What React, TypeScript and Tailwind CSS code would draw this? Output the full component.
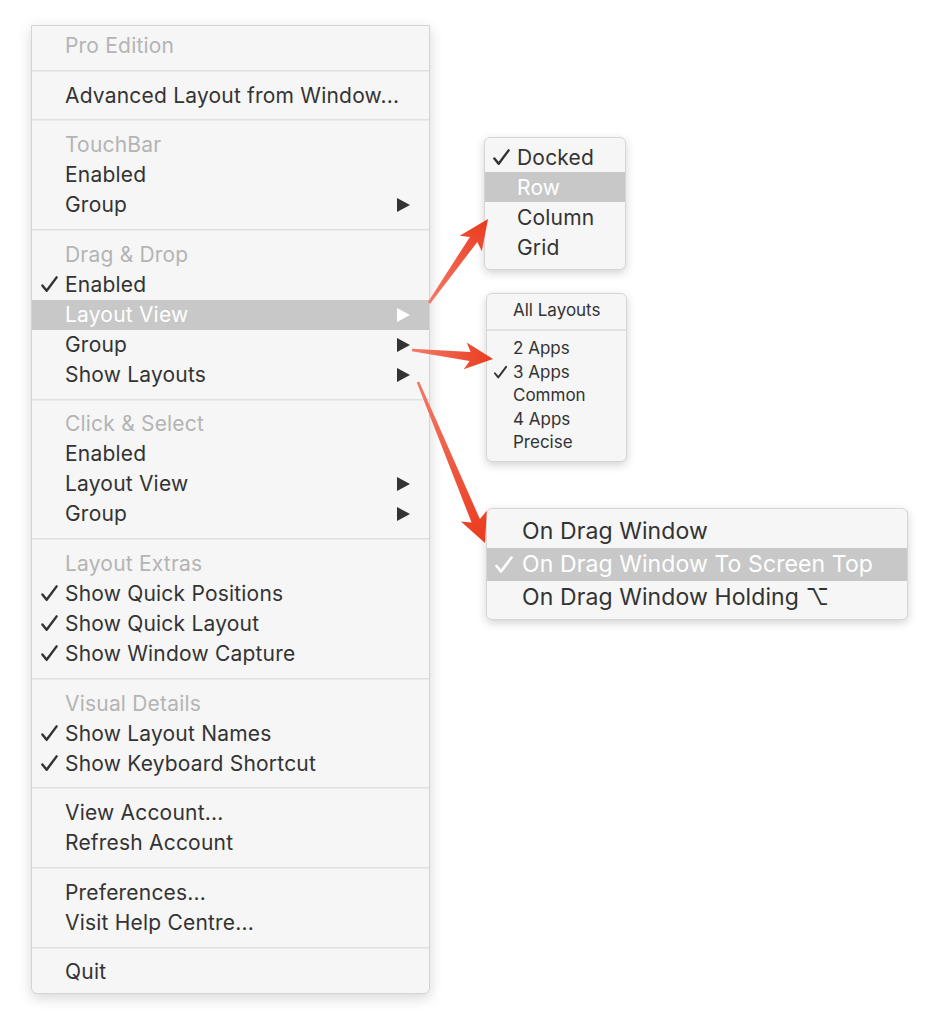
import React from "react";

type Row =
  | { sep: true }
  | { label: string; header?: boolean; checked?: boolean; sub?: boolean; active?: boolean };

const mainRows: Row[] = [
  { label: "Pro Edition", header: true },
  { sep: true },
  { label: "Advanced Layout from Window..." },
  { sep: true },
  { label: "TouchBar", header: true },
  { label: "Enabled" },
  { label: "Group", sub: true },
  { sep: true },
  { label: "Drag & Drop", header: true },
  { label: "Enabled", checked: true },
  { label: "Layout View", sub: true, active: true },
  { label: "Group", sub: true },
  { label: "Show Layouts", sub: true },
  { sep: true },
  { label: "Click & Select", header: true },
  { label: "Enabled" },
  { label: "Layout View", sub: true },
  { label: "Group", sub: true },
  { sep: true },
  { label: "Layout Extras", header: true },
  { label: "Show Quick Positions", checked: true },
  { label: "Show Quick Layout", checked: true },
  { label: "Show Window Capture", checked: true },
  { sep: true },
  { label: "Visual Details", header: true },
  { label: "Show Layout Names", checked: true },
  { label: "Show Keyboard Shortcut", checked: true },
  { sep: true },
  { label: "View Account..." },
  { label: "Refresh Account" },
  { sep: true },
  { label: "Preferences..." },
  { label: "Visit Help Centre..." },
  { sep: true },
  { label: "Quit" },
];

const SubArrow = ({ white }: { white?: boolean }) => (
  <svg width="14" height="14" viewBox="0 0 14 14">
    <polygon points="1,0 14,7 1,14" fill={white ? "#ffffff" : "#333333"} />
  </svg>
);

const Check = ({ size }: { size: number }) => (
  <svg width={size} height={size} viewBox="0 0 20 20">
    <path d="M2.5 11 L7 16.5 L17.5 2.5" fill="none" stroke="currentColor" strokeWidth="2.6" strokeLinecap="round" strokeLinejoin="round" />
  </svg>
);

const MainMenu = () => (
  <div className="w-[399px] bg-[#f6f6f6] border border-[#d4d4d4] rounded-b-[6px] pt-[5px] pb-[6px] shadow-[0_4px_14px_rgba(0,0,0,0.16)]">
    {mainRows.map((r, i) =>
      "sep" in r ? (
        <div key={i} className="h-[19.6px] flex items-center">
          <div className="w-full h-[2px] bg-[#e0e0e0] border-b border-[#ebebeb]" />
        </div>
      ) : (
        <div
          key={i}
          className={
            "h-[30px] flex items-center text-[21px] tracking-[0.2px] leading-none " +
            (r.active ? "bg-[#c8c8c8] text-white" : r.header ? "text-[#b4b4b4]" : "text-[#333333]")
          }
        >
          <span className="w-[33px] pl-[8px] flex items-center">{r.checked ? <Check size={19} /> : null}</span>
          <span className="flex-1 -mt-[1px]">{r.label}</span>
          {r.sub && (
            <span className="pr-[19px] flex items-center">
              <SubArrow white={r.active} />
            </span>
          )}
        </div>
      )
    )}
  </div>
);

const subShell =
  "absolute bg-[#f6f6f6] border border-[#d6d6d6] rounded-[6px] shadow-[0_3px_10px_rgba(0,0,0,0.18)]";

const MenuItem = (props: {
  label: string;
  checked?: boolean;
  active?: boolean;
  h: string;
  size: string;
  checkW: string;
  checkSize: number;
}) => (
  <div
    className={
      "flex items-center leading-none " +
      props.h +
      " " +
      props.size +
      " " +
      (props.active ? "bg-[#c8c8c8] text-white" : "text-[#333333]")
    }
  >
    <span className={props.checkW + " flex items-center"}>{props.checked ? <Check size={props.checkSize} /> : null}</span>
    <span className="whitespace-nowrap">{props.label}</span>
  </div>
);

const Arrow = ({ t, p, back, half }: { t: [number, number]; p: [number, number]; back: number; half: number }) => {
  const dx = p[0] - t[0];
  const dy = p[1] - t[1];
  const len = Math.hypot(dx, dy);
  const ux = dx / len;
  const uy = dy / len;
  const nx = -uy;
  const ny = ux;
  const bx = p[0] - ux * back;
  const by = p[1] - uy * back;
  const nbx = p[0] - ux * (back - 5);
  const nby = p[1] - uy * (back - 5);
  const pts = [
    [t[0] + nx * 1.3, t[1] + ny * 1.3],
    [nbx + nx * 4.5, nby + ny * 4.5],
    [bx + nx * half, by + ny * half],
    [p[0], p[1]],
    [bx - nx * half, by - ny * half],
    [nbx - nx * 4.5, nby - ny * 4.5],
    [t[0] - nx * 1.3, t[1] - ny * 1.3],
  ]
    .map((q) => q[0].toFixed(1) + "," + q[1].toFixed(1))
    .join(" ");
  const id = "g" + t[0] + t[1];
  return (
    <g>
      <defs>
        <linearGradient id={id} gradientUnits="userSpaceOnUse" x1={t[0]} y1={t[1]} x2={p[0]} y2={p[1]}>
          <stop offset="0" stopColor="#f47a66" />
          <stop offset="1" stopColor="#ea3a1e" />
        </linearGradient>
      </defs>
      <polygon points={pts} fill={`url(#${id})`} />
    </g>
  );
};

export default function App() {
  return (
    <div className="relative w-[940px] h-[1032px] bg-white overflow-hidden font-[Inter,'Noto_Sans',sans-serif]">
      <div className="pt-[25px] pl-[31px]">
        <MainMenu />
      </div>

      <div className={subShell + " left-[484px] top-[137px] w-[142px] pt-[4px] pb-[7px]"}>
        <MenuItem label="Docked" checked h="h-[30px]" size="text-[21px] tracking-[0.2px]" checkW="w-[32px] pl-[7px]" checkSize={19} />
        <MenuItem label="Row" active h="h-[30px]" size="text-[21px] tracking-[0.2px]" checkW="w-[32px] pl-[7px]" checkSize={19} />
        <MenuItem label="Column" h="h-[30px]" size="text-[21px] tracking-[0.2px]" checkW="w-[32px] pl-[7px]" checkSize={19} />
        <MenuItem label="Grid" h="h-[30px]" size="text-[21px] tracking-[0.2px]" checkW="w-[32px] pl-[7px]" checkSize={19} />
      </div>

      <div className={subShell + " left-[486px] top-[293px] w-[141px] pt-[4px] pb-[6px]"}>
        <MenuItem label="All Layouts" h="h-[24px]" size="text-[17px]" checkW="w-[26px] pl-[6px]" checkSize={15} />
        <div className="h-[15px] flex items-center">
          <div className="w-full h-[2px] bg-[#e0e0e0]" />
        </div>
        <MenuItem label="2 Apps" h="h-[23.5px]" size="text-[17px]" checkW="w-[26px] pl-[6px]" checkSize={15} />
        <MenuItem label="3 Apps" checked h="h-[23.5px]" size="text-[17px]" checkW="w-[26px] pl-[6px]" checkSize={15} />
        <MenuItem label="Common" h="h-[23.5px]" size="text-[17px]" checkW="w-[26px] pl-[6px]" checkSize={15} />
        <MenuItem label="4 Apps" h="h-[23.5px]" size="text-[17px]" checkW="w-[26px] pl-[6px]" checkSize={15} />
        <MenuItem label="Precise" h="h-[23.5px]" size="text-[17px]" checkW="w-[26px] pl-[6px]" checkSize={15} />
      </div>

      <div className={subShell + " left-[486px] top-[508px] w-[422px] pt-[6px] pb-[5px]"}>
        <MenuItem label="On Drag Window" h="h-[33px]" size="text-[23px] tracking-[0.1px]" checkW="w-[35px] pl-[7px]" checkSize={20} />
        <MenuItem label="On Drag Window To Screen Top" checked active h="h-[33px]" size="text-[23px] tracking-[0.1px]" checkW="w-[35px] pl-[7px]" checkSize={20} />
        <MenuItem label="On Drag Window Holding ⌥" h="h-[33px]" size="text-[23px] tracking-[0.1px]" checkW="w-[35px] pl-[7px]" checkSize={20} />
      </div>

      <svg className="absolute left-0 top-0 pointer-events-none" width="940" height="1032" viewBox="0 0 940 1032">
        <Arrow t={[429, 303]} p={[488, 219]} back={30} half={13.5} />
        <Arrow t={[412, 350]} p={[493, 359]} back={28} half={13.5} />
        <Arrow t={[418, 382]} p={[485, 543]} back={29} half={14} />
      </svg>
    </div>
  );
}
